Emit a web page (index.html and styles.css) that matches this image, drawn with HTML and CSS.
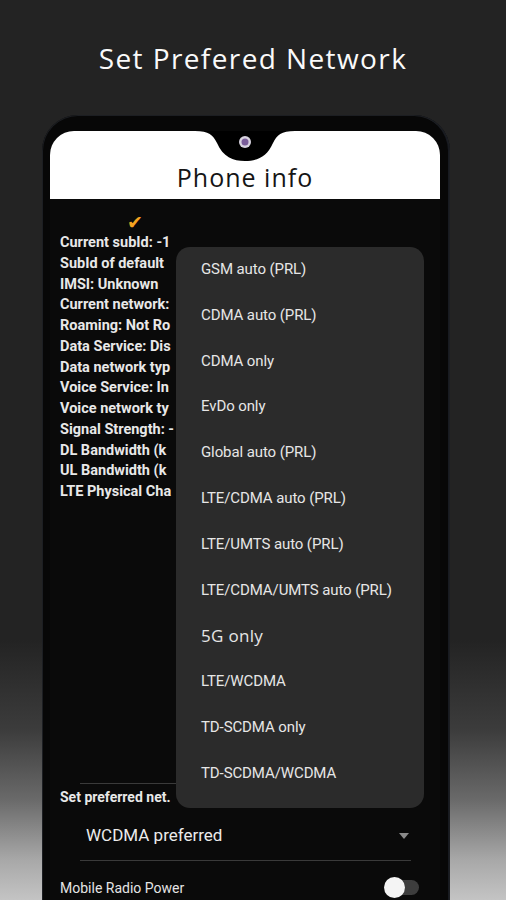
FILE: index.html
```html
<!DOCTYPE html>
<html>
<head>
<meta charset="utf-8">
<link rel="stylesheet" href="styles.css">
</head>
<body>
<h1 class="title">Set Prefered Network</h1>
<div class="phone">
  <div class="screen">
    <div class="header">
      <svg class="notch" width="100" height="34" viewBox="0 0 100 34">
        <path d="M0 0 H100 C86 0 82 4 78 12 C72 26 62 30 50 30 C38 30 28 26 22 12 C18 4 14 0 0 0 Z" fill="#000"/>
        <circle cx="50" cy="11" r="6" fill="#d8d3e0"/>
        <circle cx="50" cy="11" r="3.5" fill="#7a5d9a"/>
      </svg>
      <div class="header-title">Phone info</div>
    </div>
    <div class="body">
      <div class="check">✔</div>
      <ul class="info">
        <li>Current subId: -1</li>
        <li>SubId of default</li>
        <li>IMSI: Unknown</li>
        <li>Current network:</li>
        <li>Roaming: Not Ro</li>
        <li>Data Service: Dis</li>
        <li>Data network typ</li>
        <li>Voice Service: In</li>
        <li>Voice network ty</li>
        <li>Signal Strength: -</li>
        <li>DL Bandwidth (k</li>
        <li>UL Bandwidth (k</li>
        <li>LTE Physical Cha</li>
      </ul>
      <div class="lower">
        <div class="divider"></div>
        <div class="label">Set preferred net.</div>
        <div class="select">
          <span>WCDMA preferred</span>
          <svg class="arrow" width="10" height="6" viewBox="0 0 10 6"><path d="M0 0 H10 L5 6 Z" fill="#8a8a8a"/></svg>
        </div>
        <div class="divider"></div>
        <div class="row">
          <span>Mobile Radio Power</span>
          <span class="switch"><span class="thumb"></span></span>
        </div>
      </div>
      <ul class="menu">
        <li>GSM auto (PRL)</li>
        <li>CDMA auto (PRL)</li>
        <li>CDMA only</li>
        <li>EvDo only</li>
        <li>Global auto (PRL)</li>
        <li>LTE/CDMA auto (PRL)</li>
        <li>LTE/UMTS auto (PRL)</li>
        <li>LTE/CDMA/UMTS auto (PRL)</li>
        <li class="big">5G only</li>
        <li>LTE/WCDMA</li>
        <li>TD-SCDMA only</li>
        <li>TD-SCDMA/WCDMA</li>
      </ul>
    </div>
  </div>
</div>
</body>
</html>
```

FILE: styles.css
```css
html, body {
  margin: 0;
  padding: 0;
  height: 900px;
  overflow: hidden;
}
body {
  background: linear-gradient(to bottom, #232323 0, #232323 640px, #3c3c3c 730px, #6a6a6a 800px, #a8a8a8 860px, #c4c4c4 900px);
  font-family: Roboto, "Noto Sans", sans-serif;
}
.title {
  margin: 0;
  padding-top: 40px;
  height: 36px;
  line-height: 36px;
  text-align: center;
  color: #fafafa;
  font-family: "Open Sans", sans-serif;
  font-weight: 500;
  font-size: 28px;
  letter-spacing: 1.4px;
}
.phone {
  margin: 39px 0 0 42px;
  width: 391px;
  height: 800px;
  padding: 16px 9px 0 8px;
  background: #070707;
  border-radius: 36px 36px 0 0;
  box-shadow: inset 0 0 0 1px #1c1e22, inset -2px 0 0 #171a20;
}
.screen {
  width: 390px;
  height: 100%;
}
.header {
  position: relative;
  height: 68px;
  background: #fff;
  border-radius: 24px 24px 0 0;
  display: flex;
  align-items: flex-end;
  justify-content: center;
}
.notch {
  position: absolute;
  left: 145px;
  top: 0;
}
.header-title {
  font-family: "Open Sans", sans-serif;
  font-size: 25px;
  color: #151515;
  letter-spacing: 1px;
  line-height: 34px;
  padding-bottom: 5px;
}
.body {
  position: relative;
  background: #0a0a0a;
  height: 701px;
  overflow: hidden;
  padding-top: 14px;
  box-sizing: border-box;
}
.check {
  color: #f4a320;
  font-size: 19px;
  line-height: 20px;
  height: 20px;
  padding-left: 77px;
}
.info {
  list-style: none;
  margin: 0 0 0 10px;
  padding: 0;
  color: #e8e8e8;
  font-size: 14.5px;
  font-weight: 700;
  line-height: 20.75px;
  white-space: nowrap;
}
.lower {
  margin-top: 280px;
  color: #e8e8e8;
}
.divider {
  height: 1px;
  background: #3a3a3a;
  margin: 0 29px 0 30px;
}
.label {
  padding-left: 10px;
  font-size: 14px;
  font-weight: 700;
  line-height: 26px;
  white-space: nowrap;
}
.select {
  display: flex;
  justify-content: space-between;
  align-items: center;
  height: 50px;
  padding: 0 31px 0 36px;
  font-size: 17px;
  color: #ececec;
}
.arrow {
  margin-top: 2px;
}
.row {
  display: flex;
  justify-content: space-between;
  align-items: center;
  height: 48px;
  padding: 6px 21px 0 10px;
  box-sizing: border-box;
  font-size: 14px;
  color: #e4e4e4;
}
.switch {
  position: relative;
  width: 34px;
  height: 15px;
  border-radius: 8px;
  background: #3d3d3d;
}
.thumb {
  position: absolute;
  left: -1px;
  top: -3px;
  width: 21px;
  height: 21px;
  border-radius: 50%;
  background: #f4f4f4;
}
.menu {
  position: absolute;
  left: 126px;
  top: 48px;
  width: 248px;
  height: 561px;
  margin: 0;
  padding: 0;
  list-style: none;
  background: #2b2b2b;
  border-radius: 14px;
  box-sizing: border-box;
}
.menu li {
  height: 45.8px;
  line-height: 45.8px;
  padding-left: 25px;
  font-size: 15px;
  color: #e6e6e6;
  letter-spacing: -0.1px;
}
.menu li.big {
  font-size: 17px;
  font-family: "Open Sans", sans-serif;
  letter-spacing: 0.3px;
}
```
